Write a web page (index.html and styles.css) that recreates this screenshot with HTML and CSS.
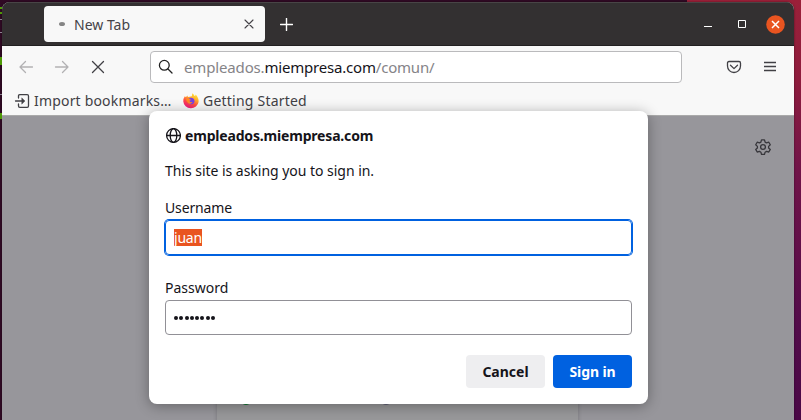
FILE: index.html
```html
<!DOCTYPE html>
<html lang="en">
<head>
<meta charset="utf-8">
<title>New Tab</title>
<link rel="stylesheet" href="styles.css">
</head>
<body>
<div class="terminal-edge"><i class="g"></i><i class="g"></i><i class="w"></i><i class="w"></i><i class="g tall"></i><i class="w far"></i><i class="g last"></i></div>
<main class="window">
  <header class="titlebar">
    <div class="tab"><span class="spinner"></span><span class="tab-title">New Tab</span>
      <svg class="tab-close" width="10" height="10" viewBox="0 0 10 10"><path d="M1 1l8 8M9 1L1 9"/></svg>
    </div>
    <svg class="plus" width="13" height="13" viewBox="0 0 13 13"><path d="M6.5.5v12M.5 6.5h12"/></svg>
    <div class="controls">
      <svg width="8" height="18" viewBox="0 0 8 18"><path d="M0 11.5h8"/></svg>
      <svg width="8" height="18" viewBox="0 0 8 18"><path d="M.5 5.5h7v7h-7z"/></svg>
      <svg class="close" width="19" height="19" viewBox="0 0 19 19"><circle cx="9.5" cy="9.5" r="9.3"/><path d="M6 6l7 7M13 6l-7 7"/></svg>
    </div>
  </header>
  <nav class="toolbar">
    <svg class="dim" width="16" height="16" viewBox="0 0 16 16"><path d="M7.500 2.500L2 8l5.500 5.500M2 8h12.500"/></svg>
    <svg class="dim" width="16" height="16" viewBox="0 0 16 16"><path d="M8.500 2.500L14 8l-5.500 5.500M14 8H1.500"/></svg>
    <svg width="16" height="16" viewBox="0 0 16 16"><path d="M2.500 2.500l11 11M13.500 2.500l-11 11"/></svg>
    <div class="address">
      <svg width="16" height="16" viewBox="0 0 16 16"><circle cx="6.300" cy="6.300" r="4.900"/><path d="M10 10l4 4"/></svg>
      <span class="url"><span class="sub">empleados.</span><span class="domain">miempresa.com</span><span class="path">/comun/</span></span>
    </div>
    <svg class="pocket" width="16" height="16" viewBox="0 0 16 16"><path d="M3 2.500h10q1.500 0 1.500 1.500v3a6.500 6.500 0 0 1-13 0V4q0-1.500 1.500-1.500z"/><path d="M4.500 6.200L8 9.600l3.500-3.400"/></svg>
    <svg class="menu" width="12" height="12" viewBox="0 0 12 12"><path d="M0 1.500h12M0 5.500h12M0 9.500h12"/></svg>
  </nav>
  <div class="bookmarks">
    <svg class="import" width="16" height="16" viewBox="0 0 16 16"><path d="M4.500 5V3q0-1.300 1.300-1.300h7.400q1.300 0 1.300 1.300v10q0 1.300-1.300 1.300H5.800q-1.300 0-1.300-1.300v-2M1.500 8h8"/><path class="solid" d="M8 5.200L10.900 8 8 10.800z"/></svg>
    <span class="bm-import">Import bookmarks…</span>
    <svg class="fox" width="16" height="16" viewBox="0 0 16 16">
      <defs><linearGradient id="flame" x1=".8" y1="0" x2=".3" y2="1"><stop offset="0" stop-color="#fff044"/><stop offset=".35" stop-color="#ffac2b"/><stop offset=".65" stop-color="#ff4b45"/><stop offset="1" stop-color="#ed1683"/></linearGradient></defs>
      <path fill="url(#flame)" d="M1.800 3.300L3 4.200 4.200 2.600 5 4.100 8.800 3.300 9.300.2Q11 1.200 11.500 3.100Q12.800 2.500 12.700 1.500Q16 5 15.600 9A7.700 7.200 0 0 1 .3 8.500Q.2 5.500 1.800 3.300z"/>
      <path fill="#7542e5" d="M5 6.200q2.500-2.400 5.600-.5 2 2.800-.4 5-2.800 1.600-5-.7z"/>
      <path fill="#ff8a24" d="M3 5.200q2.800-.5 5.200 1.700l-1.700.8.600 1.400 2.600.2q-1.600 2-4.200 1.200Q3 9 3 5.200z"/>
    </svg>
    <span class="bm-start">Getting Started</span>
  </div>
  <section class="page">
    <svg class="gear" width="16" height="16" viewBox="0 0 16 16"><path d="M6.500.8h3l.6 2.300 1.400.8 2.300-.7 1.500 2.600-1.700 1.600v1.500l1.700 1.500-1.500 2.600-2.300-.6-1.400.8-.6 2.200h-3l-.6-2.200-1.400-.8-2.300.6-1.500-2.600 1.700-1.500V7.400L.7 5.800l1.500-2.600 2.300.7 1.400-.8z"/><circle cx="8" cy="8" r="2.400"/></svg>
    <div class="search-card"><span class="dot green"></span><span class="dot slate"></span></div>
  </section>
</main>
<form class="dialog">
  <div class="site">
    <svg width="16" height="16" viewBox="0 0 16 16"><circle cx="8.500" cy="7.500" r="6.900"/><ellipse cx="8.500" cy="7.500" rx="3.300" ry="6.900"/><path d="M1.800 7.500h13.400"/></svg>
    <strong>empleados.miempresa.com</strong>
  </div>
  <p class="message"><span>This site is asking you to sign in.</span></p>
  <label class="user-label">Username</label>
  <div class="field focused"><span class="selected">juan</span></div>
  <label class="pass-label">Password</label>
  <div class="field"><span class="bullets"><i></i><i></i><i></i><i></i><i></i><i></i><i></i><i></i></span></div>
  <div class="actions"><button type="button" class="cancel">Cancel</button><button type="button" class="signin">Sign in</button></div>
</form>
</body>
</html>
```
FILE: styles.css
```css
* { box-sizing: border-box; }
body {
  margin: 0; width: 801px; height: 420px; overflow: hidden; position: relative;
  padding: 2px 7px 0 2px;
  background: linear-gradient(#300a24, #300a24) 0 0 / 687px 3px no-repeat,
    linear-gradient(#300a24, #300a24) 0 0 / 10px 420px no-repeat,
    linear-gradient(#9b2039 0, #8e1c3d 80px, #701348 170px, #520b4a 330px, #4a0746 420px);
  font: 15px/20px "Noto Sans", "Open Sans", sans-serif; color: #15141a;
}
svg { display: block; flex: none; fill: none; stroke: currentColor; stroke-width: 1.3; stroke-linecap: round; stroke-linejoin: round; }
span, strong, label { white-space: nowrap; }
.terminal-edge { position: absolute; left: 0; top: 7px; width: 2px; }
.terminal-edge i { display: block; height: 2px; margin-bottom: 3px; background: #4e9a06; }
.terminal-edge .w { height: 1px; margin: 5px 0 12px; background: #8b8290; }
.terminal-edge .tall { height: 8px; margin-top: 24px; }
.terminal-edge .far { margin-top: 29px; }
.terminal-edge .last { height: 6px; margin-top: 18px; }
.window { height: 418px; display: flex; flex-direction: column; border-radius: 8px 8px 0 0; overflow: hidden; background: #f8f8f8; box-shadow: 0 0 2px #0008; }
.titlebar { height: 44px; flex: none; display: flex; align-items: flex-start; background: #333031; border-top: 1px solid #484546; border-bottom: 1px solid #222021; color: #fff; }
.tab { width: 221px; height: 36px; margin: 3px 0 0 42px; border-radius: 4px; background: #f8f8f8; color: #454348; display: flex; align-items: center; padding: 1px 11px 0 15px; }
.spinner { width: 6px; height: 4px; border-radius: 50%; background: #858585; margin: -2px 9px 0 0; }
.tab-close { margin-left: auto; stroke-width: 1.1; margin-top: -2px; }
.plus { margin: 15px 0 0 15px; stroke-width: 1.4; }
.controls { margin: 12px 9px 0 auto; display: flex; gap: 26px; align-items: flex-start; }
.controls svg { stroke-linecap: butt; stroke-linejoin: miter; stroke-width: 1; }
.controls .close { margin-left: -6px; stroke-width: 1.5; }
.close circle { fill: #e95420; stroke: none; }
.toolbar { height: 41px; flex: none; display: flex; align-items: center; padding: 0 18px 0 16px; color: #414045; gap: 20px; }
.toolbar .dim { color: #b2b1b3; }
.address { width: 532px; height: 32px; margin: 0 4px 0 24px; border: 1px solid #bababc; border-radius: 4px; background: #fff; display: flex; align-items: center; gap: 10px; padding: 0 7px; color: #222; }
.pocket { margin-left: auto; }
.menu { margin-left: 2px; }
.url { display: flex; color: #858488; letter-spacing: -.2px; }
.sub { letter-spacing: -.15px; }
.domain { color: #15141a; }
.bookmarks { height: 28px; flex: none; display: flex; align-items: center; padding: 0 0 0 12px; color: #414045; }
.bm-import { width: 137px; margin: 0 12px 0 4px; letter-spacing: .18px; }
.bm-start { margin-left: 4px; letter-spacing: .22px; }
.fox { stroke: none; }
.page { flex: 1; background: #97969b; border-top: 1px solid #aaa; position: relative; }
.gear { margin: 23px 23px 0 auto; color: #38373c; }
.search-card { width: 361px; height: 265px; margin: 37px 0 0 215px; border-radius: 6px; background: #98989a; box-shadow: 0 1px 4px #0003; display: flex; align-items: flex-start; padding: 213px 0 0 23px; gap: 128px; }
.search-card { height: 251px; }
.dot { width: 12px; height: 16px; border-radius: 50%; margin-top: -16px; }
.green { background: #0d722e; }
.slate { background: #5d5d74; }
.dialog { position: absolute; left: 149px; top: 111px; width: 499px; height: 293px; border-radius: 8px; background: #fff; box-shadow: 0 2px 14px #0005; padding: 15px 16px 16px; display: flex; flex-direction: column; }
.site { height: 20px; display: flex; align-items: center; gap: 4px; }
.site strong { letter-spacing: -.18px; }
.message { height: 20px; margin: 15px 0 17px; letter-spacing: -.03px; }
label { height: 20px; line-height: 20px; }
.user-label { letter-spacing: -.15px; }
.field { height: 35px; border: 1px solid #919096; border-radius: 4px; margin: 2px 0 23px; padding: 0 8px; display: flex; align-items: center; }
.focused { border-color: #0061e0; box-shadow: 0 0 0 1px #0061e0; }
.selected { background: #e95420; color: #fff; line-height: 17px; height: 17px; letter-spacing: -.2px; }
.bullets { display: flex; gap: 1.300px; }
.bullets i { width: 4px; height: 4px; border-radius: 50%; background: #15141a; }
.actions { display: flex; justify-content: flex-end; gap: 8px; margin-top: -3px; }
button { width: 79px; height: 33px; padding: 0; border: 0; border-radius: 4px; background: #eeeef0; color: #15141a; font: 700 14px/20px "Noto Sans", sans-serif; }
.signin { background: #0061e0; color: #fff; letter-spacing: -.1px; }
.import .solid { fill: currentColor; stroke-width: .6; }
.tab-title { font-size: 14px; }
.bm-import, .bm-start { font-size: 14px; }
.site strong, .message, label, .selected { font-size: 14px; }
```
